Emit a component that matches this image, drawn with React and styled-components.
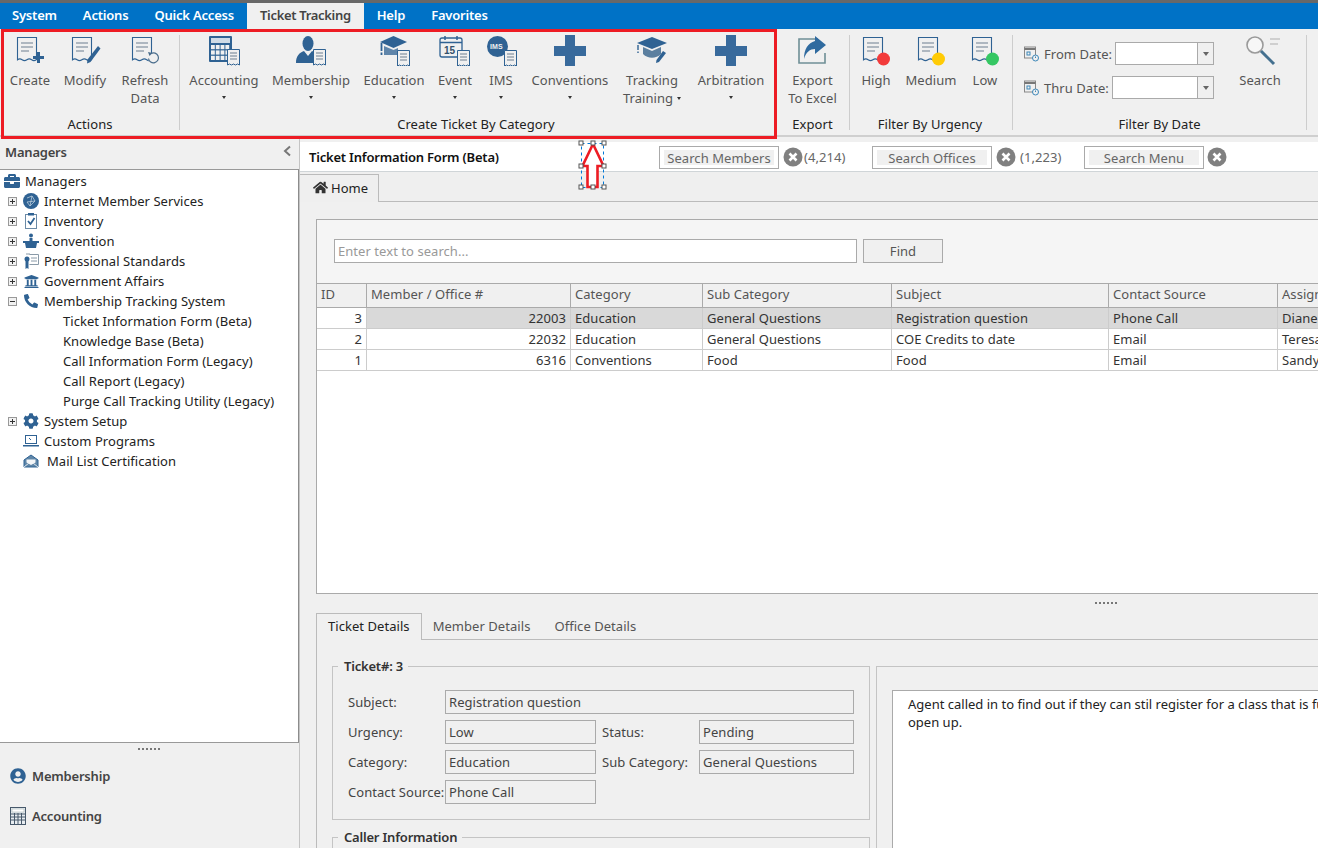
import React from 'react'
import styled, { createGlobalStyle } from 'styled-components'
import { FaBriefcase, FaCog, FaHome, FaPhoneAlt, FaUniversity, FaUserCircle } from 'react-icons/fa'

const BLUE = '#2f6293'

const Global = createGlobalStyle`
  html, body { margin: 0; padding: 0; overflow: hidden; }
  body { font-family: "Noto Sans", "Open Sans", sans-serif; font-size: 13px; letter-spacing: 0.05px; color: #333; }
  * { box-sizing: border-box; }
`
const Shell = styled.div`
  position: relative;
  width: 1318px;
  height: 848px;
  overflow: hidden;
  display: flex;
  flex-direction: column;
  background: #f0f0f0;
  border-top: 3px solid #686868;
`
const MenuBar = styled.div`
  height: 26px;
  background: #0072c6;
  display: flex;
`
const MenuItem = styled.div`
  padding: 0 13px;
  margin-left: ${p => (p.$first ? '-1px' : '0')};
  line-height: 25px;
  font-weight: 600;
  letter-spacing: ${p => (p.$active ? '-0.32px' : '-0.2px')};
  color: ${p => (p.$active ? '#444' : '#fff')};
  background: ${p => (p.$active ? '#f0f0f0' : 'transparent')};
`
const Ribbon = styled.div`
  height: 108px;
  display: flex;
  background: #f0f0f0;
  border-bottom: 2px solid #cfcfcf;
`
const Group = styled.div`
  display: flex;
  flex-direction: column;
  padding: 0 ${p => p.$right || 0}px 0 ${p => p.$left || 0}px;
`
const GroupBody = styled.div`
  flex: 1;
  display: flex;
  padding-right: ${p => p.$right || 0}px;
`
const GroupLabel = styled.div`
  height: 20px;
  text-align: center;
  line-height: 18px;
  color: #222;
`
const Separator = styled.div`
  width: 1px;
  margin: 6px 0 5px;
  background: #cdcdcd;
`
const RibbonButton = styled.div`
  width: ${p => p.$w}px;
  padding-top: 5px;
  display: flex;
  flex-direction: column;
  align-items: center;
  color: #555;
  text-align: center;
  line-height: 18px;
  svg { flex: none; margin-bottom: 5px; }
`
const Caret = styled.span`
  display: ${p => (p.$inline ? 'inline-block' : 'block')};
  width: 0;
  height: 0;
  margin: ${p => (p.$inline ? '0 0 2px 4px' : '7px auto 0')};
  vertical-align: middle;
  border-left: 2.5px solid transparent;
  border-right: 2.5px solid transparent;
  border-top: 3px solid #333;
`
const DateFields = styled.div`
  width: 217px;
  padding: 13px 16px 0 11px;
  display: flex;
  flex-direction: column;
  gap: 11px;
`
const DateRow = styled.div`
  height: 23px;
  display: flex;
  align-items: center;
  color: #555;
  white-space: nowrap;
  svg { margin-right: 5px; flex: none; }
`
const Combo = styled.div`
  flex: 1;
  height: 23px;
  margin-left: 3px;
  display: flex;
  justify-content: flex-end;
  background: #fff;
  border: 1px solid #aaa;
`
const ComboArrow = styled.div`
  width: 16px;
  display: flex;
  align-items: center;
  justify-content: center;
  background: #f0f0f0;
  border-left: 1px solid #aaa;
  &::after {
    content: '';
    border-left: 3.5px solid transparent;
    border-right: 3.5px solid transparent;
    border-top: 4px solid #666;
  }
`
const Body = styled.div`
  flex: 1;
  min-height: 0;
  display: flex;
`
const Sidebar = styled.div`
  width: 300px;
  flex: none;
  display: flex;
  flex-direction: column;
  border-right: 1px solid #c4c4c4;
`
const SideHead = styled.div`
  height: 32px;
  padding: 6px 7px 0 5px;
  display: flex;
  justify-content: space-between;
  font-weight: 600;
  letter-spacing: -0.2px;
  color: #444;
  svg { margin-top: 2px; }
`
const Tree = styled.div`
  flex: 1;
  padding-top: 1px;
  background: #fff;
  border-top: 1px solid #999;
  border-bottom: 1px solid #999;
  border-right: 1px solid #8c8c8c;
`
const TreeRow = styled.div`
  height: 20px;
  display: flex;
  align-items: center;
  padding-left: ${p => p.$indent}px;
  color: #222;
  white-space: nowrap;
`
const Expander = styled.span`
  width: 9px;
  height: 9px;
  margin-right: 6px;
  position: relative;
  flex: none;
  background: #f2f2f2;
  border: 1px solid #999;
  &::before {
    content: '';
    position: absolute;
    left: 1px;
    top: 3px;
    width: 5px;
    height: 1px;
    background: #333;
  }
  &::after {
    content: '';
    display: ${p => (p.$open ? 'none' : 'block')};
    position: absolute;
    left: 3px;
    top: 1px;
    width: 1px;
    height: 5px;
    background: #333;
  }
`
const TreeIcon = styled.span`
  width: 16px;
  height: 16px;
  margin-right: ${p => p.$gap || 5}px;
  display: flex;
  align-items: center;
  justify-content: center;
  flex: none;
  color: ${BLUE};
`
const Dots = styled.div`
  width: 23px;
  height: 2px;
  background: repeating-linear-gradient(90deg, #777 0 2px, transparent 2px 4px);
`
const Splitter = styled.div`
  width: ${p => (p.$w ? `${p.$w}px` : 'auto')};
  height: ${p => p.$h}px;
  flex: none;
  display: flex;
  justify-content: center;
  padding-top: ${p => p.$top}px;
`
const OutlookPanel = styled.div`
  height: 105px;
  flex: none;
`
const OutlookItem = styled.div`
  height: 40px;
  padding-left: 10px;
  display: flex;
  align-items: center;
  gap: 6px;
  font-weight: 600;
  letter-spacing: -0.2px;
  color: #444;
`
const Main = styled.div`
  flex: 1;
  min-width: 0;
  padding-top: 5px;
  display: flex;
  flex-direction: column;
`
const TopBar = styled.div`
  height: 30px;
  flex: none;
  display: flex;
  align-items: center;
  background: #fff;
  border-bottom: 1px solid #d0d5d8;
`
const FormTitle = styled.div`
  width: 359px;
  padding-left: 9px;
  font-weight: 600;
  letter-spacing: -0.2px;
  color: #111;
`
const SearchGroup = styled.div`
  width: ${p => p.$w}px;
  flex: none;
  margin-top: 1px;
  display: flex;
  align-items: center;
  gap: ${p => p.$gap || 4}px;
  svg { flex: none; }
`
const SearchBox = styled.div`
  width: 120px;
  height: 23px;
  padding: 3px 4px;
  background: #fff;
  border: 1px solid #aaa;
`
const SearchInner = styled.div`
  height: 100%;
  background: #f0f0f0;
  color: #666;
  text-align: center;
  line-height: 16px;
`
const Count = styled.span`
  color: #666;
  margin-left: ${p => p.$shift || 0}px;
`
const HomeTabs = styled.div`
  height: 30px;
  flex: none;
  display: flex;
  align-items: flex-end;
  background: #efefef;
  border-bottom: 1px solid #bbb;
`
const HomeTab = styled.div`
  width: 79px;
  height: 28px;
  margin-bottom: -1px;
  padding: 0 0 2px 13px;
  display: flex;
  align-items: center;
  gap: 3px;
  color: #222;
  background: #efefef;
  border: 1px solid #bbb;
  border-left: none;
  border-bottom: none;
  svg { color: #333; }
`
const Card = styled.div`
  height: 375px;
  flex: none;
  margin: 17px -20px 0 16px;
  display: flex;
  flex-direction: column;
  background: #f5f5f5;
  border: 1px solid #aaa;
`
const SearchRow = styled.div`
  height: 63px;
  flex: none;
  padding: 19px 0 0 17px;
  display: flex;
  gap: 6px;
`
const SearchInput = styled.div`
  width: 523px;
  height: 24px;
  padding-left: 3px;
  background: #fff;
  border: 1px solid #aaa;
  color: #999;
  line-height: 22px;
`
const FindButton = styled.div`
  width: 80px;
  height: 24px;
  background: #f0f0f0;
  border: 1px solid #aaa;
  color: #555;
  text-align: center;
  line-height: 22px;
`
const GridArea = styled.div`
  flex: 1;
  background: #fff;
  border-top: 1px solid #aaa;
`
const GridRow = styled.div`
  display: grid;
  grid-template-columns: 50px 204px 132px 189px 217px 169px 120px;
  height: ${p => (p.$head ? 24 : 21)}px;
`
const Cell = styled.div`
  padding: 0 4px;
  overflow: hidden;
  white-space: nowrap;
  text-align: ${p => (p.$right ? 'right' : 'left')};
  line-height: ${p => (p.$head ? 21 : 20)}px;
  color: ${p => (p.$head ? '#555' : '#333')};
  background: ${p => (p.$head ? '#f0f0f0' : p.$selected ? '#d9d9d9' : '#fff')};
  border-right: 1px solid ${p => (p.$head ? '#aaa' : '#ccc')};
  border-bottom: 1px solid ${p => (p.$head ? '#aaa' : '#ccc')};
`
const Tabs = styled.div`
  height: 27px;
  flex: none;
  margin-left: 16px;
  display: flex;
  border-bottom: 1px solid #bbb;
`
const Tab = styled.div`
  height: ${p => (p.$active ? 27 : 26)}px;
  padding: 0 ${p => (p.$active ? 11 : 10)}px;
  margin-right: ${p => (p.$active ? 0 : 2)}px;
  line-height: 25px;
  color: ${p => (p.$active ? '#222' : '#555')};
  background: #f0f0f0;
  border: 1px solid ${p => (p.$active ? '#bbb' : 'transparent')};
  border-bottom: none;
`
const DetailPanel = styled.div`
  flex: 1;
  min-height: 0;
  margin-left: 16px;
  padding: 17px 0 0 15px;
  display: flex;
  gap: 6px;
  overflow: hidden;
  border-left: 1px solid #bbb;
`
const LeftColumn = styled.div`
  width: 538px;
  flex: none;
`
const Box = styled.fieldset`
  margin: 0 0 ${p => p.$mb || 0}px;
  padding: 15px 15px 15px;
  min-width: 0;
  height: ${p => p.$h || 'auto'};
  border: 1px solid #c4c4c4;
  legend {
    margin-left: -10px;
    padding: 0 5px 0 6px;
    font-weight: 600;
    letter-spacing: -0.2px;
    line-height: 18px;
    color: #333;
  }
`
const FormGrid = styled.div`
  display: grid;
  grid-template-columns: 97px 151px 103px 155px;
  grid-auto-rows: 24px;
  row-gap: 6px;
  align-items: center;
`
const FieldLabel = styled.div`
  color: #444;
  white-space: nowrap;
  margin-left: ${p => (p.$second ? 6 : 0)}px;
`
const Field = styled.div`
  height: 24px;
  grid-column: ${p => (p.$wide ? 'span 3' : 'auto')};
  padding-left: 3px;
  border: 1px solid #aaa;
  line-height: 22px;
  color: #444;
  background: #f0f0f0;
`
const NotesBox = styled.div`
  flex: 1;
  margin-top: 9px;
  padding: 23px 0 0 15px;
  border: 1px solid #c4c4c4;
  border-bottom: none;
`
const Notes = styled.div`
  height: 300px;
  padding: 4px 0 0 15px;
  background: #fff;
  border: 1px solid #aaa;
  color: #222;
  white-space: nowrap;
  letter-spacing: 0;
  line-height: 18px;
`
const RedFrame = styled.div`
  position: absolute;
  left: 1px;
  top: 26px;
  width: 776px;
  height: 110px;
  border: 3px solid #ed1c24;
  pointer-events: none;
`
const ArrowMark = styled.svg`
  position: absolute;
  left: 576px;
  top: 133px;
`

const DocShape = () => (
  <g fill="none" stroke={BLUE} strokeWidth="1.1">
    <path d="M7.5 3.5h19v22c-2 1.6-3 1.6-4.8 .3-1.8-1.3-3-1.3-4.8 0s-3 1.3-4.8 0c-1.6-1.2-3-1.2-4.6 0z" />
    <path d="M11 9h12M11 13h12M11 17h8" stroke="#6d7f90" />
  </g>
)
const SmallDoc = ({ x = 0, y = 0 }) => (
  <g transform={`translate(${x} ${y})`}>
    <path d="M.5 .5h12v15.5l-2-1-2 1-2-1-2 1-2-1-2 1z" fill="#f0f0f0" stroke={BLUE} />
    <path d="M3 4h7M3 7h7M3 10h7" stroke="#6d7f90" />
  </g>
)
const Ico = ({ children }) => (
  <svg width="40" height="32" viewBox="0 0 40 32">{children}</svg>
)
const CreateIcon = () => (
  <Ico><DocShape /><path d="M28.5 18v11M23 23.5h11" stroke={BLUE} strokeWidth="3" /></Ico>
)
const ModifyIcon = () => (
  <Ico><DocShape /><path d="M33 12l2.5 2.5-10 13.5-3.5 1.5 .5-4z" fill={BLUE} /></Ico>
)
const RefreshIcon = () => (
  <Ico><DocShape /><circle cx="28.5" cy="24" r="5.5" fill="#f0f0f0" /><path d="M26 19.5a5 5 0 1 1-2.5 5" fill="none" stroke="#4a6d8c" strokeWidth="1.2" /><path d="M23 18l4.5 1-3 3z" fill="#4a6d8c" /></Ico>
)
const CalcIcon = () => (
  <Ico>
    <rect x="5" y="2" width="23" height="26" rx="1" fill={BLUE} />
    <rect x="7" y="4" width="19" height="5" fill="#cfdbe6" />
    {[0, 1, 2].map(r => [0, 1, 2, 3].map(c => (
      <rect key={`${r}${c}`} x={7 + c * 4.8} y={11 + r * 5.4} width="3.8" height="4.2" fill="#f0f0f0" />
    )))}
    <SmallDoc x="23" y="15" />
  </Ico>
)
const PersonIcon = () => (
  <Ico>
    <ellipse cx="17" cy="9.5" rx="5.5" ry="7.5" fill={BLUE} />
    <path d="M5 29c0-7 3-10 8-12l4 5 4-5c2 .7 3 1.5 3 3v9z" fill={BLUE} />
    <SmallDoc x="22" y="15" />
  </Ico>
)
const CapIcon = () => (
  <Ico>
    <path d="M19.5 2l13.5 6-13.5 6-13.5-6z" fill={BLUE} />
    <path d="M10 12l9.5 4 4.5-2v7H10z" fill={BLUE} opacity=".75" />
    <path d="M7.5 9v12" stroke={BLUE} strokeWidth="1.8" strokeDasharray="8 1.5" />
    <SmallDoc x="23" y="16" />
  </Ico>
)
const EventIcon = () => (
  <Ico>
    <rect x="5" y="4" width="22" height="19" rx="2" fill="#f0f0f0" stroke={BLUE} strokeWidth="1.3" />
    <path d="M5 8.5h22M10 2v4M22 2v4" stroke={BLUE} strokeWidth="1.5" />
    <text x="9" y="20" fontSize="10" fontWeight="700" fill="#33506b" fontFamily="Liberation Sans">15</text>
    <SmallDoc x="22" y="16" />
  </Ico>
)
const ImsIcon = () => (
  <Ico>
    <circle cx="16.5" cy="12.5" r="10.5" fill={BLUE} />
    <text x="9" y="15" fontSize="7" fontWeight="700" fill="#f0f0f0" fontFamily="Liberation Sans">IMS</text>
    <SmallDoc x="23" y="16" />
  </Ico>
)
const PlusIcon = () => (
  <Ico><path d="M15 1h10v11h11v10H25v11H15V22H4V12h11z" fill="#386a9c" /></Ico>
)
const TrainingIcon = () => (
  <Ico>
    <path d="M20 3l15 6-15 6-15-6z" fill={BLUE} />
    <path d="M11 13l9 4 9-4v7c-5 5-13 5-18 0z" fill="#5b7f9f" />
    <path d="M6 11v8" stroke={BLUE} strokeWidth="1.4" strokeDasharray="5 1.5" />
    <path d="M31 17l3 2-7 9-3 1 .5-3z" fill={BLUE} />
  </Ico>
)
const ExportIcon = () => (
  <Ico>
    <path d="M25 5H6v24h26V19" fill="none" stroke="#6f8f96" strokeWidth="1.6" />
    <path d="M22 2l11 9-11 9v-5c-5 0-9 3-11 10 0-10 4-16 11-18z" fill="#2f6a9f" />
  </Ico>
)
const FlagIcon = ({ color }) => (
  <Ico><DocShape /><circle cx="27.5" cy="25" r="6.5" fill={color} /></Ico>
)
const SearchIcon = () => (
  <Ico>
    <circle cx="15" cy="11" r="8" fill="#f7f7f7" stroke="#9a9a9a" strokeWidth="1.6" />
    <path d="M21 17l13 13" stroke="#44708f" strokeWidth="3" />
    <path d="M30 5h11M30 10h8" stroke="#c4c4c4" strokeWidth="1.5" />
  </Ico>
)
const DateIcon = () => (
  <svg width="15" height="16" viewBox="0 0 15 16">
    <rect x=".5" y="1" width="11" height="11" fill="none" stroke="#888" />
    <path d="M.5 3h11" stroke="#777" strokeWidth="2" />
    <rect x="3" y="6" width="3" height="3" fill="none" stroke="#3c87b8" />
    <circle cx="11.5" cy="12" r="3" fill="#f0f0f0" stroke="#3c87b8" />
    <path d="M11.5 10.5V12" stroke="#3c87b8" />
  </svg>
)
const CloseIcon = () => (
  <svg width="20" height="20" viewBox="0 0 20 20">
    <circle cx="10" cy="10" r="9.5" fill="#808080" />
    <path d="M6.5 6.5l7 7M13.5 6.5l-7 7" stroke="#fff" strokeWidth="2.6" />
  </svg>
)
const GlobeIcon = () => (
  <svg width="16" height="16" viewBox="0 0 16 16">
    <circle cx="8" cy="8" r="8" fill={BLUE} />
    <path d="M4 5l5-2 3 5-5 5-3-4 8-1M9 3l-2 10" fill="none" stroke="#b9cbdb" strokeWidth=".8" />
  </svg>
)
const ClipIcon = () => (
  <svg width="16" height="16" viewBox="0 0 16 16">
    <rect x="2.5" y="1.5" width="11" height="14" fill="#fff" stroke="#6b8aa6" />
    <rect x="5" y="0" width="6" height="2.5" fill={BLUE} />
    <path d="M5 8l2.5 3 4-6" fill="none" stroke={BLUE} strokeWidth="1.8" />
  </svg>
)
const PodiumIcon = () => (
  <svg width="16" height="16" viewBox="0 0 16 16">
    <circle cx="8" cy="2.5" r="2" fill={BLUE} />
    <path d="M6.5 5h3v3h-3zM0 8h16v2H0zM2 10h12l-1 5H3z" fill={BLUE} />
  </svg>
)
const CertIcon = () => (
  <svg width="16" height="16" viewBox="0 0 16 16">
    <circle cx="4" cy="6" r="2.5" fill={BLUE} />
    <path d="M2.5 8h3v8l-1.5-1-1.5 1z" fill={BLUE} />
    <path d="M6.5 1.5h9v10h-9" fill="none" stroke="#8a9aa8" />
    <path d="M3 1h4" stroke="#8a9aa8" />
    <path d="M8 5h6M8 8h6" stroke="#8a9aa8" />
  </svg>
)
const LaptopIcon = () => (
  <svg width="16" height="14" viewBox="0 0 16 14">
    <rect x="2.5" y="1.5" width="11" height="8" fill="#fff" stroke={BLUE} />
    <path d="M6 4l2 2" stroke={BLUE} />
    <path d="M0 11h16v1.5H0z" fill={BLUE} />
  </svg>
)
const MailIcon = () => (
  <svg width="16" height="14" viewBox="0 0 16 14">
    <path d="M1 6l7-5 7 5v7H1z" fill="#5f86a8" stroke={BLUE} />
    <path d="M3.5 5.5h9v3L8 11 3.5 8.500z" fill="#f4f6f8" />
    <path d="M1 13l5-4M15 13l-5-4" stroke="#dfe6ec" />
  </svg>
)
const AbacusIcon = () => (
  <svg width="16" height="18" viewBox="0 0 16 18">
    <rect x=".5" y=".5" width="15" height="17" fill="#e8edf1" stroke="#47596b" />
    <rect x="2" y="2" width="12" height="3" fill="#fff" stroke="#9aa" strokeWidth=".5" />
    <path d="M1 7h14M1 10h14M1 13h14M4.5 6v11M8 6v11M11.5 6v11" stroke="#47596b" />
  </svg>
)

const categoryButtons = [
  { w: 88, label: 'Accounting', icon: <CalcIcon /> },
  { w: 86, label: 'Membership', icon: <PersonIcon /> },
  { w: 80, label: 'Education', icon: <CapIcon /> },
  { w: 42, label: 'Event', icon: <EventIcon /> },
  { w: 50, label: 'IMS', icon: <ImsIcon /> },
  { w: 88, label: 'Conventions', icon: <PlusIcon /> },
]
const treeTop = [
  { label: 'Internet Member Services', icon: <GlobeIcon /> },
  { label: 'Inventory', icon: <ClipIcon /> },
  { label: 'Convention', icon: <PodiumIcon /> },
  { label: 'Professional Standards', icon: <CertIcon /> },
  { label: 'Government Affairs', icon: <FaUniversity size={15} /> },
]
const forms = [
  'Ticket Information Form (Beta)',
  'Knowledge Base (Beta)',
  'Call Information Form (Legacy)',
  'Call Report (Legacy)',
  'Purge Call Tracking Utility (Legacy)',
]
const columns = ['ID', 'Member / Office #', 'Category', 'Sub Category', 'Subject', 'Contact Source', 'Assigned To']
const tickets = [
  [3, 22003, 'Education', 'General Questions', 'Registration question', 'Phone Call', 'Diane'],
  [2, 22032, 'Education', 'General Questions', 'COE Credits to date', 'Email', 'Teresa'],
  [1, 6316, 'Conventions', 'Food', 'Food', 'Email', 'Sandy'],
]

const App = () => (
  <Shell>
    <Global />
    <MenuBar>
      <MenuItem $first>System</MenuItem>
      <MenuItem>Actions</MenuItem>
      <MenuItem>Quick Access</MenuItem>
      <MenuItem $active>Ticket Tracking</MenuItem>
      <MenuItem>Help</MenuItem>
      <MenuItem>Favorites</MenuItem>
    </MenuBar>
    <Ribbon>
      <Group $left={5} $right={4}>
        <GroupBody>
          <RibbonButton $w={50}><CreateIcon />Create</RibbonButton>
          <RibbonButton $w={60}><ModifyIcon />Modify</RibbonButton>
          <RibbonButton $w={60}><RefreshIcon />Refresh<br />Data</RibbonButton>
        </GroupBody>
        <GroupLabel>Actions</GroupLabel>
      </Group>
      <Separator />
      <Group $right={4}>
        <GroupBody>
          {categoryButtons.map(b => (
            <RibbonButton key={b.label} $w={b.w}>{b.icon}{b.label}<Caret /></RibbonButton>
          ))}
          <RibbonButton $w={76}><TrainingIcon /><span>Tracking<br />Training<Caret $inline /></span></RibbonButton>
          <RibbonButton $w={82}><PlusIcon />Arbitration<Caret /></RibbonButton>
        </GroupBody>
        <GroupLabel>Create Ticket By Category</GroupLabel>
      </Group>
      <Group>
        <GroupBody>
          <RibbonButton $w={73}><ExportIcon />Export<br />To Excel</RibbonButton>
        </GroupBody>
        <GroupLabel>Export</GroupLabel>
      </Group>
      <Separator />
      <Group $left={2} $right={4}>
        <GroupBody>
          <RibbonButton $w={48}><FlagIcon color="#f23b3b" />High</RibbonButton>
          <RibbonButton $w={62}><FlagIcon color="#ffcb05" />Medium</RibbonButton>
          <RibbonButton $w={46}><FlagIcon color="#35c763" />Low</RibbonButton>
        </GroupBody>
        <GroupLabel>Filter By Urgency</GroupLabel>
      </Group>
      <Separator />
      <Group>
        <GroupBody $right={16}>
          <DateFields>
            <DateRow><DateIcon />From Date:<Combo><ComboArrow /></Combo></DateRow>
            <DateRow><DateIcon />Thru Date:<Combo><ComboArrow /></Combo></DateRow>
          </DateFields>
          <RibbonButton $w={60}><SearchIcon />Search</RibbonButton>
        </GroupBody>
        <GroupLabel>Filter By Date</GroupLabel>
      </Group>
      <Separator />
    </Ribbon>
    <Body>
      <Sidebar>
        <SideHead>
          Managers
          <svg width="10" height="12" viewBox="0 0 10 12"><path d="M8 1.5L3 6l5 4.5" fill="none" stroke="#777" strokeWidth="2" /></svg>
        </SideHead>
        <Tree>
          <TreeRow $indent={4}><TreeIcon><FaBriefcase size={16} /></TreeIcon>Managers</TreeRow>
          {treeTop.map(t => (
            <TreeRow key={t.label} $indent={8}><Expander /><TreeIcon>{t.icon}</TreeIcon>{t.label}</TreeRow>
          ))}
          <TreeRow $indent={8}><Expander $open /><TreeIcon><FaPhoneAlt size={14} /></TreeIcon>Membership Tracking System</TreeRow>
          {forms.map(f => <TreeRow key={f} $indent={63}>{f}</TreeRow>)}
          <TreeRow $indent={8}><Expander /><TreeIcon><FaCog size={16} /></TreeIcon>System Setup</TreeRow>
          <TreeRow $indent={23}><TreeIcon><LaptopIcon /></TreeIcon>Custom Programs</TreeRow>
          <TreeRow $indent={23}><TreeIcon $gap={8}><MailIcon /></TreeIcon>Mail List Certification</TreeRow>
        </Tree>
        <OutlookPanel>
          <Splitter $h={13} $top={5}><Dots /></Splitter>
          <OutlookItem><FaUserCircle size={16} color={BLUE} />Membership</OutlookItem>
          <OutlookItem><AbacusIcon />Accounting</OutlookItem>
        </OutlookPanel>
      </Sidebar>
      <Main>
        <TopBar>
          <FormTitle>Ticket Information Form (Beta)</FormTitle>
          <SearchGroup $w={213}><SearchBox><SearchInner>Search Members</SearchInner></SearchBox><CloseIcon /><Count $shift={-3}>(4,214)</Count></SearchGroup>
          <SearchGroup $w={212}><SearchBox><SearchInner>Search Offices</SearchInner></SearchBox><CloseIcon /><Count>(1,223)</Count></SearchGroup>
          <SearchGroup $w={150} $gap={3}><SearchBox><SearchInner>Search Menu</SearchInner></SearchBox><CloseIcon /></SearchGroup>
        </TopBar>
        <HomeTabs>
          <HomeTab><FaHome size={15} />Home</HomeTab>
        </HomeTabs>
        <Card>
          <SearchRow>
            <SearchInput>Enter text to search...</SearchInput>
            <FindButton>Find</FindButton>
          </SearchRow>
          <GridArea>
            <GridRow $head>
              {columns.map(c => <Cell key={c} $head>{c}</Cell>)}
            </GridRow>
            {tickets.map((t, i) => (
              <GridRow key={t[0]}>
                {t.map((v, j) => (
                  <Cell key={j} $right={j < 2} $selected={i === 0 && j > 0}>{v}</Cell>
                ))}
              </GridRow>
            ))}
          </GridArea>
        </Card>
        <Splitter $w={1612} $h={19} $top={8}><Dots /></Splitter>
        <Tabs>
          <Tab $active>Ticket Details</Tab>
          <Tab>Member Details</Tab>
          <Tab>Office Details</Tab>
        </Tabs>
        <DetailPanel>
          <LeftColumn>
            <Box $mb={8}>
              <legend>Ticket#: 3</legend>
              <FormGrid>
                <FieldLabel>Subject:</FieldLabel><Field $wide>Registration question</Field>
                <FieldLabel>Urgency:</FieldLabel><Field>Low</Field>
                <FieldLabel $second>Status:</FieldLabel><Field>Pending</Field>
                <FieldLabel>Category:</FieldLabel><Field>Education</Field>
                <FieldLabel $second>Sub Category:</FieldLabel><Field>General Questions</Field>
                <FieldLabel>Contact Source:</FieldLabel><Field>Phone Call</Field>
              </FormGrid>
            </Box>
            <Box $h="100px"><legend>Caller Information</legend></Box>
          </LeftColumn>
          <NotesBox>
            <Notes>Agent called in to find out if they can stil register for a class that is full or if a seat will<br />open up.</Notes>
          </NotesBox>
        </DetailPanel>
      </Main>
    </Body>
    <RedFrame />
    <ArrowMark width="36" height="56" viewBox="0 0 36 56">
      <rect x="5.5" y="7.5" width="22" height="44" fill="none" stroke="#0078d7" strokeDasharray="3 3" />
      <path d="M17 8L6.5 30H11.5V51H21.5V30H27.5z" fill="#fff" stroke="#ed1c24" strokeWidth="2.6" />
      {[[5, 7], [17, 7], [28, 7], [5, 30], [28, 30], [5, 51], [17, 51], [28, 51]].map(([x, y]) => (
        <rect key={`${x}-${y}`} x={x - 2} y={y - 2} width="4" height="4" fill="#fff" stroke="#555" />
      ))}
    </ArrowMark>
  </Shell>
)

export default App
